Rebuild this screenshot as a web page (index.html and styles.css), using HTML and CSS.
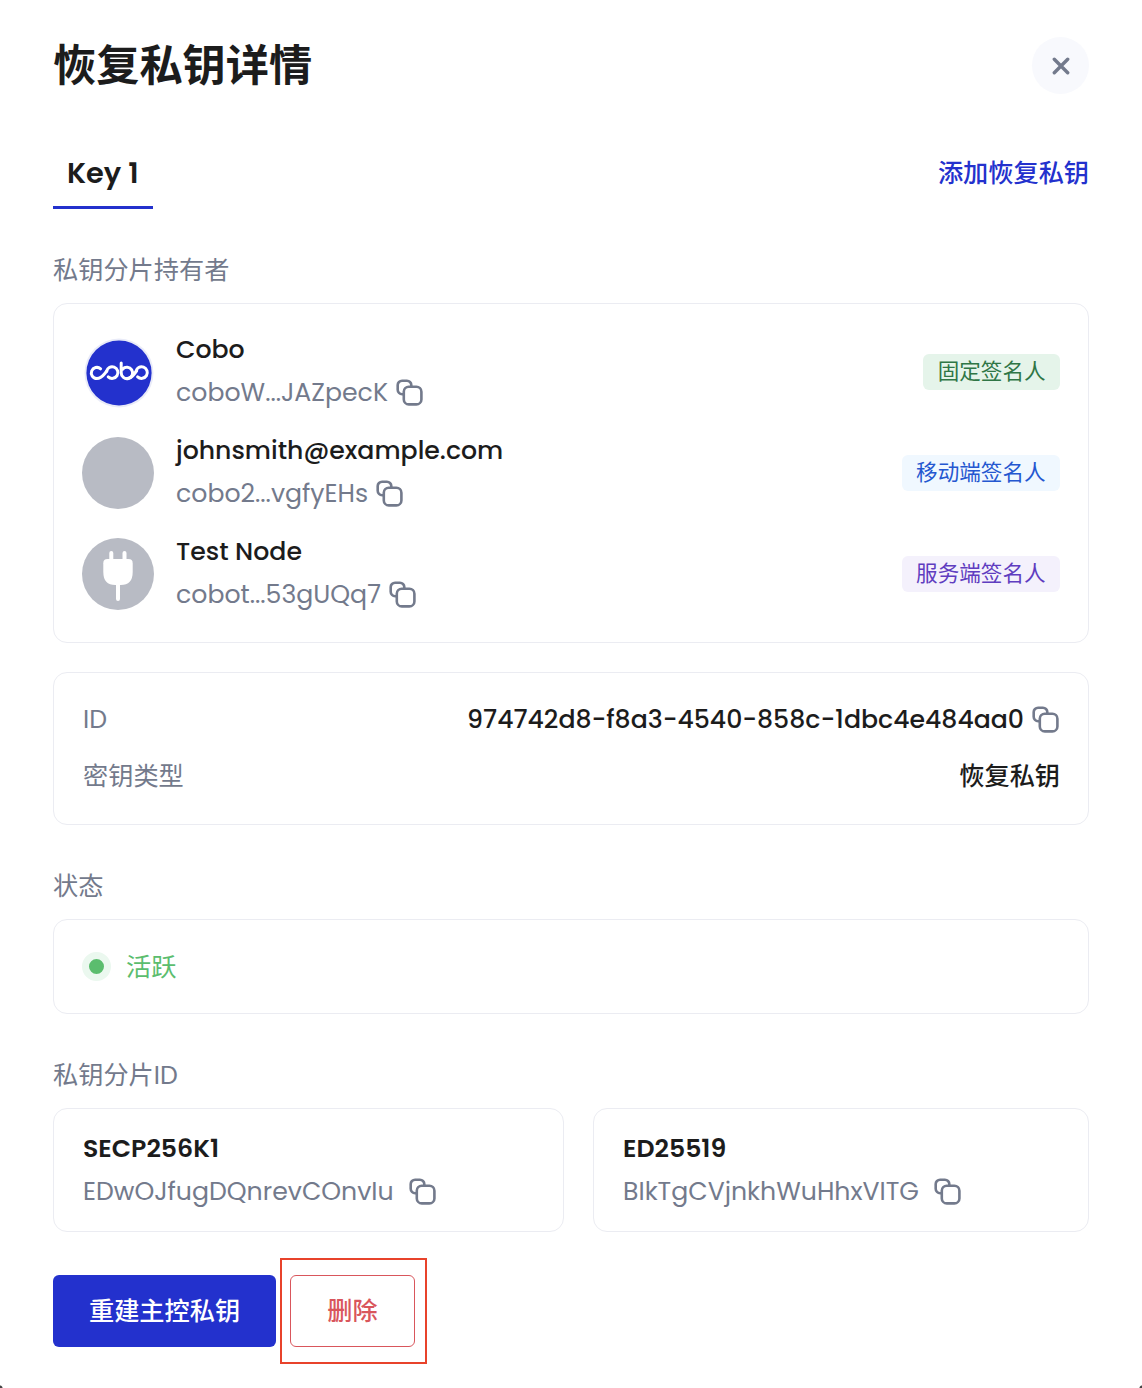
FILE: index.html
```html
<!DOCTYPE html>
<html lang="zh-CN">
<head>
<meta charset="utf-8">
<title>恢复私钥详情</title>
<link rel="stylesheet" href="styles.css">
</head>
<body>
<svg width="0" height="0" class="defs" aria-hidden="true">
  <symbol id="copy" viewBox="0 0 28 28">
    <g fill="none" stroke="currentColor" stroke-width="2.6">
      <path d="M7.500 15.200H6.100a4.400 4.400 0 0 1-4.400-4.400V6.100a4.400 4.400 0 0 1 4.400-4.400h4.800a4.400 4.400 0 0 1 4.400 4.400V7.500" stroke-linecap="round"/>
      <rect x="7.800" y="7.800" width="17.600" height="17.600" rx="5"/>
    </g>
  </symbol>
</svg>
<main class="panel">
  <header class="header">
    <h1 class="title">恢复私钥详情</h1>
    <button class="close" aria-label="关闭">
      <svg width="18" height="18" viewBox="0 0 18 18"><path d="M2.300 2.300l13.400 13.400M15.700 2.300L2.300 15.700" stroke="currentColor" stroke-width="3.400" stroke-linecap="round"/></svg>
    </button>
  </header>
  <nav class="tabs">
    <a class="tab">Key 1</a>
    <a class="add">添加恢复私钥</a>
  </nav>

  <h2 class="label">私钥分片持有者</h2>
  <section class="card holders">
    <div class="holder">
      <svg class="avatar" viewBox="0 0 72 72">
        <circle cx="37" cy="37" r="34.500" fill="#e9ebf8"/>
        <circle cx="37" cy="37" r="32.600" fill="#2331cd"/>
        <g fill="none" stroke="#fff" stroke-width="3" stroke-linecap="round" stroke-linejoin="round">
          <path d="M18.600 32.800a5.600 5.600 0 1 0-3.800 9.800c3 0 5-1.400 7.600-4.600l2.600-3.200"/>
          <path d="M24.400 35.600a5.800 5.800 0 1 1 1.800 5.300"/>
          <path d="M39.200 27v9.800a5.700 5.700 0 1 0 1.400-3.600"/>
          <path d="M44.900 42.600c3 0 5-1.400 7.400-4.600l2.400-3.200"/>
          <path d="M53.800 35.600a5.800 5.800 0 1 1 1.800 5.300"/>
        </g>
      </svg>
      <div class="who">
        <div class="name">Cobo</div>
        <div class="addr"><span>coboW...JAZpecK</span><svg class="copy"><use href="#copy"/></svg></div>
      </div>
      <span class="tag tag-green">固定签名人</span>
    </div>
    <div class="holder">
      <svg class="avatar" viewBox="0 0 72 72"><circle cx="36" cy="36" r="36" fill="#b8bbc4"/></svg>
      <div class="who">
        <div class="name">johnsmith@example.com</div>
        <div class="addr"><span>cobo2...vgfyEHs</span><svg class="copy"><use href="#copy"/></svg></div>
      </div>
      <span class="tag tag-blue">移动端签名人</span>
    </div>
    <div class="holder">
      <svg class="avatar" viewBox="0 0 72 72">
        <circle cx="36" cy="36" r="36" fill="#b8bbc4"/>
        <path d="M29.300 15v8M42.500 15v8M36 45v16" stroke="#fff" stroke-width="4" stroke-linecap="round"/>
        <path d="M25.500 21h21q4.200 0 4.200 4.200V34q0 13-12 13h-5.400q-12 0-12-13v-8.800q0-4.200 4.200-4.200z" fill="#fff"/>
      </svg>
      <div class="who">
        <div class="name">Test Node</div>
        <div class="addr"><span>cobot...53gUQq7</span><svg class="copy"><use href="#copy"/></svg></div>
      </div>
      <span class="tag tag-purple">服务端签名人</span>
    </div>
  </section>

  <section class="card info">
    <div class="row"><span class="key">ID</span><span class="value"><span>974742d8-f8a3-4540-858c-1dbc4e484aa0</span><svg class="copy"><use href="#copy"/></svg></span></div>
    <div class="row"><span class="key">密钥类型</span><span class="value">恢复私钥</span></div>
  </section>

  <h2 class="label">状态</h2>
  <section class="card status"><i class="dot"></i><span class="state">活跃</span></section>

  <h2 class="label">私钥分片<span class="lat">ID</span></h2>
  <div class="shares">
    <section class="card share">
      <div class="curve">SECP256K1</div>
      <div class="addr"><span>EDwOJfugDQnrevCOnvIu</span><svg class="copy"><use href="#copy"/></svg></div>
    </section>
    <section class="card share">
      <div class="curve">ED25519</div>
      <div class="addr"><span>BIkTgCVjnkhWuHhxVITG</span><svg class="copy"><use href="#copy"/></svg></div>
    </section>
  </div>

  <footer class="actions">
    <button class="btn primary">重建主控私钥</button>
    <div class="marked"><button class="btn danger">删除</button></div>
  </footer>
</main>
</body>
</html>
```
FILE: styles.css
```css
*, *::before, *::after { box-sizing: border-box; }
body {
  margin: 0;
  min-height: 1388px;
  background:
    radial-gradient(circle at 0 100%, #444 2px, transparent 3px) left bottom / 4px 4px no-repeat,
    radial-gradient(circle at 100% 100%, #444 2px, transparent 3px) right bottom / 4px 4px no-repeat,
    #fff;
  color: #1c1c1c;
  font-family: Poppins, "Noto Sans CJK SC", sans-serif;
  font-size: 25.200px;
  line-height: 36px;
}
h1, h2 { margin: 0; }
button { font-family: inherit; padding: 0; border: 0; }
.defs { display: block; }
.panel { padding: 37px 53px 0; }
.header { display: flex; justify-content: space-between; align-items: flex-start; height: 57px; }
.title { font: 600 43.200px/50px "Noto Sans CJK SC", sans-serif; }
.close { display: grid; place-items: center; width: 57px; height: 57px; border-radius: 50%; background: #f8f9fd; color: #737a8c; }
.tabs { display: flex; justify-content: space-between; margin-top: 43px; height: 72px; }
.tab { width: 100px; padding-left: 14px; border-bottom: 3px solid #2331cd; font-size: 28.800px; font-weight: 600; line-height: 73px; white-space: nowrap; }
.add { font: 500 25.200px/69px "Noto Sans CJK SC", sans-serif; color: #2331cd; }
.label { margin-top: 41px; height: 38px; margin-bottom: 15px; font: 400 25.200px/37px "Noto Sans CJK SC", sans-serif; color: #737a8c; }
.label .lat { font-family: Poppins, sans-serif; }
.card { border: 1px solid #ebecf2; border-radius: 14px; }
.holders { height: 340px; padding: 32px 28px 0; display: flex; flex-direction: column; gap: 28.800px; }
.holder { display: flex; align-items: center; height: 72px; }
.avatar { width: 72px; height: 72px; margin-right: 22px; }
.who { flex: 1; }
.name { font-weight: 500; line-height: 42.400px; }
.addr { display: flex; align-items: center; gap: 8px; line-height: 43.600px; color: #737a8c; }
.copy { width: 28px; height: 28px; color: #737a8c; }
.tag { height: 36px; padding: 0 14.400px; border-radius: 6px; font: 400 21.600px/32px "Noto Sans CJK SC", sans-serif; }
.tag-green { background: #e5f4ea; color: #2f7646; }
.tag-blue { background: #f0f8ff; color: #2457d0; }
.tag-purple { background: #f4f1fc; color: #5f3dc0; }
.info { height: 153px; margin-top: 29px; padding: 18px 28px 18px 29px; display: flex; flex-direction: column; }
.row { display: flex; justify-content: space-between; align-items: center; height: 57.600px; }
.key { color: #737a8c; }
.value { display: flex; align-items: center; gap: 8px; font-weight: 500; }
.status { display: flex; align-items: center; height: 95px; padding: 0 28px; gap: 15px; color: #5bbd6e; }
.state { font: 400 25.200px/36px "Noto Sans CJK SC", sans-serif; padding-bottom: 4px; }
.dot { width: 29px; height: 29px; border: 7px solid #ebf8ef; border-radius: 50%; background: #5bbd6e; }
.shares { display: grid; grid-template-columns: 511px 496px; gap: 29px; }
.share { height: 124px; padding: 18px 29px; }
.curve { font-weight: 600; line-height: 43px; }
.share .addr { gap: 15px; }
.actions { display: flex; gap: 14px; margin-top: 43px; }
.btn { height: 72px; border-radius: 6px; font: 500 25.200px/36px "Noto Sans CJK SC", sans-serif; padding-bottom: 4px; }
.primary { width: 223px; background: #2331cd; color: #fff; }
.danger { width: 125px; background: #fff; border: 1px solid #d9565c; color: #d9565c; }
.marked { position: relative; }
.marked::after { content: ""; position: absolute; left: -10px; top: -17px; width: 147px; height: 106px; border: 2px solid #e8432b; }
```
